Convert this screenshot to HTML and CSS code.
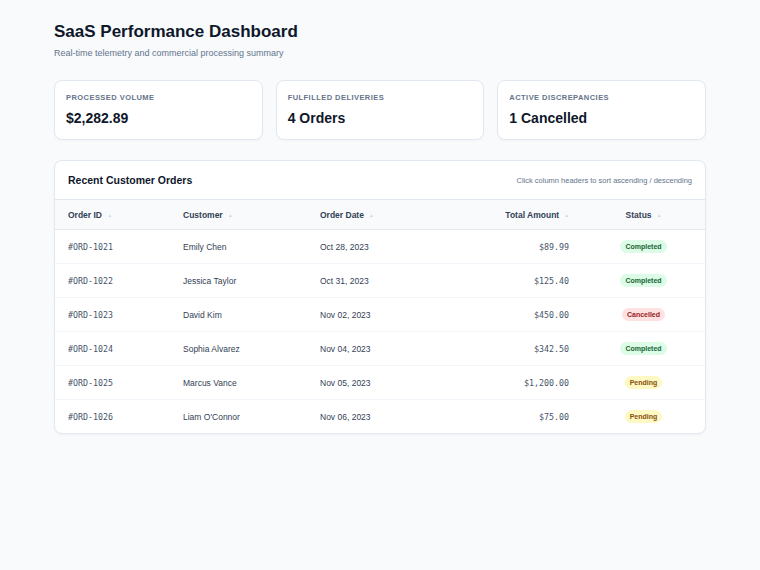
FILE: index.html
```html
<!DOCTYPE html>
<html lang="en">
<head>
  <meta charset="UTF-8">
  <title>SaaS Performance Dashboard</title>
  <link rel="stylesheet" href="styles.css">
</head>
<body>
  <div class="page">
    <h1>SaaS Performance Dashboard</h1>
    <div class="subtitle">Real-time telemetry and commercial processing summary</div>

    <div class="stats">
      <div class="stat">
        <div class="stat-label">Processed Volume</div>
        <div class="stat-value">$2,282.89</div>
      </div>
      <div class="stat">
        <div class="stat-label">Fulfilled Deliveries</div>
        <div class="stat-value">4 Orders</div>
      </div>
      <div class="stat">
        <div class="stat-label">Active Discrepancies</div>
        <div class="stat-value">1 Cancelled</div>
      </div>
    </div>

    <div class="panel">
      <div class="panel-head">
        <h2>Recent Customer Orders</h2>
        <span class="hint">Click column headers to sort ascending / descending</span>
      </div>
      <table class="orders">
        <thead>
          <tr>
            <th class="c-id">Order ID <span class="sort">▲</span></th>
            <th class="c-name">Customer <span class="sort">▲</span></th>
            <th class="c-date">Order Date <span class="sort">▲</span></th>
            <th class="c-amount">Total Amount <span class="sort">▲</span></th>
            <th class="c-status">Status <span class="sort">▲</span></th>
          </tr>
        </thead>
        <tbody>
          <tr>
            <td class="mono">#ORD-1021</td>
            <td>Emily Chen</td>
            <td>Oct 28, 2023</td>
            <td class="mono c-amount">$89.99</td>
            <td class="c-status"><span class="badge completed">Completed</span></td>
          </tr>
          <tr>
            <td class="mono">#ORD-1022</td>
            <td>Jessica Taylor</td>
            <td>Oct 31, 2023</td>
            <td class="mono c-amount">$125.40</td>
            <td class="c-status"><span class="badge completed">Completed</span></td>
          </tr>
          <tr>
            <td class="mono">#ORD-1023</td>
            <td>David Kim</td>
            <td>Nov 02, 2023</td>
            <td class="mono c-amount">$450.00</td>
            <td class="c-status"><span class="badge cancelled">Cancelled</span></td>
          </tr>
          <tr>
            <td class="mono">#ORD-1024</td>
            <td>Sophia Alvarez</td>
            <td>Nov 04, 2023</td>
            <td class="mono c-amount">$342.50</td>
            <td class="c-status"><span class="badge completed">Completed</span></td>
          </tr>
          <tr>
            <td class="mono">#ORD-1025</td>
            <td>Marcus Vance</td>
            <td>Nov 05, 2023</td>
            <td class="mono c-amount">$1,200.00</td>
            <td class="c-status"><span class="badge pending">Pending</span></td>
          </tr>
          <tr>
            <td class="mono">#ORD-1026</td>
            <td>Liam O'Connor</td>
            <td>Nov 06, 2023</td>
            <td class="mono c-amount">$75.00</td>
            <td class="c-status"><span class="badge pending">Pending</span></td>
          </tr>
        </tbody>
      </table>
    </div>
  </div>
</body>
</html>
```

FILE: styles.css
```css
body { margin: 0; background: #f8fafc; color: #0f172a; font-family: 'Liberation Sans', Arial, sans-serif; }
.page { width: 652px; margin: 0 auto; padding: 21px 0 40px; }

h1 { margin: 0; font-size: 17px; font-weight: 700; color: #0f172a; line-height: 22px; }
.subtitle { margin-top: 5px; font-size: 9px; line-height: 11px; color: #64748b; }

/* summary cards */
.stats { display: grid; grid-template-columns: repeat(3, 1fr); gap: 13px; margin-top: 21px; }
.stat { background: #fff; border: 1px solid #e2e8f0; border-radius: 8px; padding: 12px 11px 12px; box-shadow: 0 1px 2px #0f172a08; }
.stat-label { font-size: 7.5px; font-weight: 700; text-transform: uppercase; letter-spacing: 0.45px; color: #64748b; line-height: 10px; }
.stat-value { margin-top: 7px; font-size: 14px; font-weight: 700; color: #0f172a; line-height: 17px; }

/* orders table */
.panel { margin-top: 20px; background: #fff; border: 1px solid #e2e8f0; border-radius: 8px; overflow: hidden; box-shadow: 0 1px 3px #0f172a0a; }
.panel-head { display: flex; justify-content: space-between; align-items: center; height: 38px; padding: 0 13px; border-bottom: 1px solid #e2e8f0; }
.panel-head h2 { margin: 0; font-size: 10.5px; font-weight: 700; color: #0f172a; }
.hint { font-size: 7.5px; color: #64748b; }

.orders { width: 100%; border-collapse: collapse; table-layout: fixed; font-size: 8.5px; }
.orders th { height: 29px; padding: 0 13px; background: #f8fafc; text-align: left; font-weight: 700; color: #334155; border-bottom: 1px solid #e2e8f0; cursor: pointer; }
.orders td { height: 33px; padding: 0 13px; color: #334155; border-bottom: 1px solid #f1f5f9; }
.orders tbody tr:last-child td { border-bottom: none; }
.sort { font-size: 4.5px; color: #cbd5e1; margin-left: 3px; vertical-align: 1px; }

.c-id { width: 89px; }
.c-name { width: 111px; }
.c-date { width: 98px; }
.c-amount { text-align: right !important; }
.c-status { width: 97px; text-align: center !important; }

.mono { font-family: 'DejaVu Sans Mono', monospace; font-size: 8.3px; color: #475569 !important; }

.badge { display: inline-block; padding: 2.5px 5px; border-radius: 10px; font-size: 7px; font-weight: 700; line-height: 8px; }
.completed { background: #dcfce7; color: #166534; }
.cancelled { background: #fee2e2; color: #991b1b; }
.pending { background: #fef9c3; color: #854d0e; }
```
